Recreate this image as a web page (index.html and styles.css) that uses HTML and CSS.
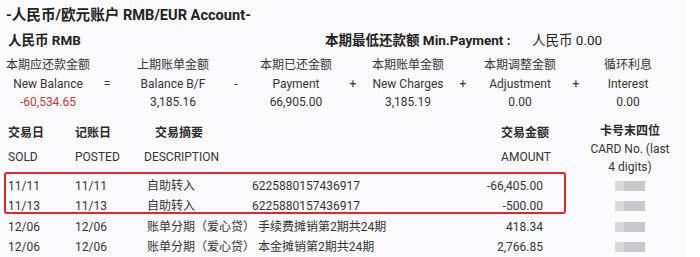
FILE: index.html
```html
<!DOCTYPE html>
<html lang="zh-CN">
<head>
<meta charset="utf-8">
<title>RMB/EUR Account</title>
<link rel="stylesheet" href="styles.css">
</head>
<body>
<div class="page">
  <div class="title">-人民币/欧元账户 RMB/EUR Account-</div>
  <div class="currency-row">
    <div class="currency">人民币 RMB</div>
    <div class="min-label">本期最低还款额 Min.Payment :</div>
    <div class="min-value">人民币 0.00</div>
  </div>

  <div class="summary">
    <div class="item">
      <span>本期应还款金额</span><span>New Balance</span><span class="neg">-60,534.65</span>
    </div>
    <div class="op">=</div>
    <div class="item">
      <span>上期账单金额</span><span>Balance B/F</span><span>3,185.16</span>
    </div>
    <div class="op">-</div>
    <div class="item">
      <span>本期已还金额</span><span>Payment</span><span>66,905.00</span>
    </div>
    <div class="op">+</div>
    <div class="item">
      <span>本期账单金额</span><span>New Charges</span><span>3,185.19</span>
    </div>
    <div class="op">+</div>
    <div class="item">
      <span>本期调整金额</span><span>Adjustment</span><span>0.00</span>
    </div>
    <div class="op">+</div>
    <div class="item">
      <span>循环利息</span><span>Interest</span><span>0.00</span>
    </div>
  </div>

  <div class="txn">
    <div class="th zh">交易日</div>
    <div class="th zh">记账日</div>
    <div class="th zh desc-zh">交易摘要</div>
    <div class="th zh amt-h amt-zh">交易金额</div>
    <div class="th card-h"><b>卡号末四位</b><span>CARD No. (last<br>4 digits)</span></div>

    <div class="th en">SOLD</div>
    <div class="th en">POSTED</div>
    <div class="th en">DESCRIPTION</div>
    <div class="th en amt-h">AMOUNT</div>

    <div class="td first">11/11</div>
    <div class="td first">11/11</div>
    <div class="td first desc"><span class="d1">自助转入</span><span class="d2">6225880157436917</span></div>
    <div class="td first amt">-66,405.00</div>
    <div class="td first card"><i class="mask"></i></div>

    <div class="td">11/13</div>
    <div class="td">11/13</div>
    <div class="td desc"><span class="d1">自助转入</span><span class="d2">6225880157436917</span></div>
    <div class="td amt">-500.00</div>
    <div class="td card"><i class="mask"></i></div>

    <div class="td">12/06</div>
    <div class="td">12/06</div>
    <div class="td desc"><span class="d1">账单分期（爱心贷）</span><span class="d3">手续费摊销第2期共24期</span></div>
    <div class="td amt">418.34</div>
    <div class="td card"><i class="mask"></i></div>

    <div class="td">12/06</div>
    <div class="td">12/06</div>
    <div class="td desc"><span class="d1">账单分期（爱心贷）</span><span class="d3">本金摊销第2期共24期</span></div>
    <div class="td amt">2,766.85</div>
    <div class="td card"><i class="mask"></i></div>
  </div>

  <div class="highlight"></div>
</div>
</body>
</html>
```

FILE: styles.css
```css
* { box-sizing: border-box; }

html, body {
  margin: 0;
  padding: 0;
  background: #ffffff;
}

body {
  font-family: Roboto, "Noto Sans CJK SC", sans-serif;
  font-size: 12px;
  color: #353535;
}

.page {
  position: relative;
  width: 685px;
  height: 257px;
  overflow: hidden;
  background: #fbfafd;
}

.title {
  padding: 5px 0 0 6px;
  font-size: 14.6px;
  font-weight: 700;
  line-height: 21px;
  color: #222222;
}

.currency-row {
  display: flex;
  margin-top: 4px;
  line-height: 20px;
  font-size: 13.5px;
  color: #222222;
}

.currency {
  width: 325px;
  padding-left: 8px;
  font-weight: 700;
}

.min-label {
  width: 207px;
  font-weight: 700;
}

.min-value {
  font-weight: 400;
}

.summary {
  display: grid;
  grid-template-columns: 96px 22px 110px 16px 104px 10px 100px 10px 104px 8px 96px;
  margin-top: 6px;
}

.item {
  display: flex;
  flex-direction: column;
  align-items: center;
  line-height: 18.5px;
  white-space: nowrap;
}

.op {
  align-self: center;
  text-align: center;
  line-height: 18.5px;
  font-size: 12px;
}

.neg {
  color: #c23b3d;
}

.txn {
  display: grid;
  grid-template-columns: 67px 69px 306px 102px 128px;
  grid-template-rows: 23.5px 23.5px 27px 20.5px 20.5px 20.5px;
  margin-top: 10.5px;
  padding-left: 8px;
  white-space: nowrap;
}

.th {
  line-height: 23.5px;
}

.th.zh {
  font-weight: 700;
  color: #2b2b2b;
}

.desc-zh {
  padding-left: 11px;
}

.amt-h {
  text-align: right;
  padding-right: 1px;
}

.amt-zh {
  padding-right: 3px;
}

.card-h {
  grid-column: 5;
  grid-row: 1 / span 2;
  padding-left: 28px;
  display: flex;
  flex-direction: column;
  align-items: center;
  line-height: 18px;
  text-align: center;
  font-weight: 400;
}

.card-h b {
  font-weight: 700;
  color: #2b2b2b;
}

.td {
  line-height: 20.5px;
}

.td.first {
  align-self: end;
  height: 20.5px;
}

.desc {
  padding-left: 3px;
}

.d1 {
  display: inline-block;
  width: 105px;
}

.d3 {
  margin-left: 6px;
}

.amt {
  text-align: right;
  padding-right: 9px;
}

.card {
  padding-left: 28px;
  display: flex;
  justify-content: center;
  align-items: center;
}

.mask {
  display: block;
  width: 30px;
  height: 10px;
  background: linear-gradient(to right, #d9d9dc 0, #d9d9dc 30%, #c9c9cc 30%, #c9c9cc 100%);
}

.highlight {
  position: absolute;
  left: 4px;
  top: 172px;
  width: 562px;
  height: 42px;
  border: 2px solid #e5262b;
  border-radius: 3px;
}
```
